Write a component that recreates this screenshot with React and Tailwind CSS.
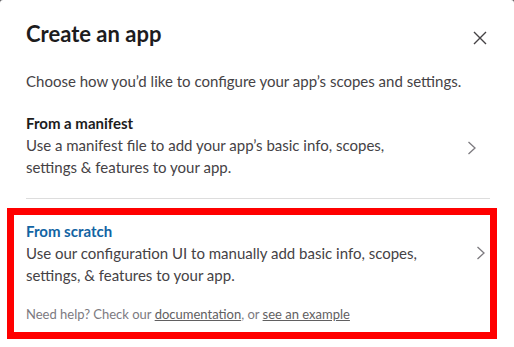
import React from "react";

const Chevron = ({ className }) => (
  <svg
    width="10"
    height="14"
    viewBox="0 0 10 14"
    fill="none"
    className={className}
  >
    <path d="M1.5 1 L8 7 L1.5 13" stroke="#7c7a7f" strokeWidth="1.3" />
  </svg>
);

const App = () => {
  return (
    <div className="w-[514px] h-[347px] bg-[#5e5d60] overflow-hidden">
      <div
        className="w-full h-full bg-white rounded-t-[3px] pl-[26px] pr-[24px] text-[#1d1c1d]"
        style={{ fontFamily: "Lato, 'Noto Sans', sans-serif" }}
      >
        {/* header */}
        <div className="flex items-start justify-between pt-[20px]">
          <h1 className="text-[22px] leading-[28px] font-bold">Create an app</h1>
          <button className="mt-[11px] mr-[3px]">
            <svg width="14" height="14" viewBox="0 0 14 14">
              <path d="M1 1 L13 13 M13 1 L1 13" stroke="#454245" strokeWidth="1.4" />
            </svg>
          </button>
        </div>

        <p className="mt-[22px] text-[15px] leading-[22px] text-[#454245]">
          Choose how you’d like to configure your app’s scopes and settings.
        </p>

        {/* manifest */}
        <div className="flex items-center justify-between mt-[20px] pb-[20px] border-b border-[#dddddd]">
          <div>
            <div className="text-[15px] leading-[22px] font-bold">From a manifest</div>
            <div className="text-[15px] leading-[22px] text-[#454245]">
              Use a manifest file to add your app’s basic info, scopes,
              <br />
              settings &amp; features to your app.
            </div>
          </div>
          <Chevron className="mr-[13px] mt-[6px]" />
        </div>

        {/* scratch */}
        <div className="mt-[9px] -ml-[19px] -mr-[7px] border-[7px] border-[#ff0000] pl-[12px] pr-[4px] pt-[5px] pb-[9px]">
          <div className="flex items-center justify-between">
            <div>
              <div className="text-[15px] leading-[22px] font-bold text-[#1264a3]">From scratch</div>
              <div className="text-[15px] leading-[22px] text-[#454245]">
                Use our configuration UI to manually add basic info, scopes,
                <br />
                settings, &amp; features to your app.
              </div>
            </div>
            <Chevron />
          </div>
          <div className="mt-[19px] text-[13px] leading-[18px] text-[#7c7a7f]">
            Need help? Check our{" "}
            <a className="underline text-[#616061]">documentation</a>, or{" "}
            <a className="underline text-[#616061]">see an example</a>
          </div>
        </div>
      </div>
    </div>
  );
};

export default App;
